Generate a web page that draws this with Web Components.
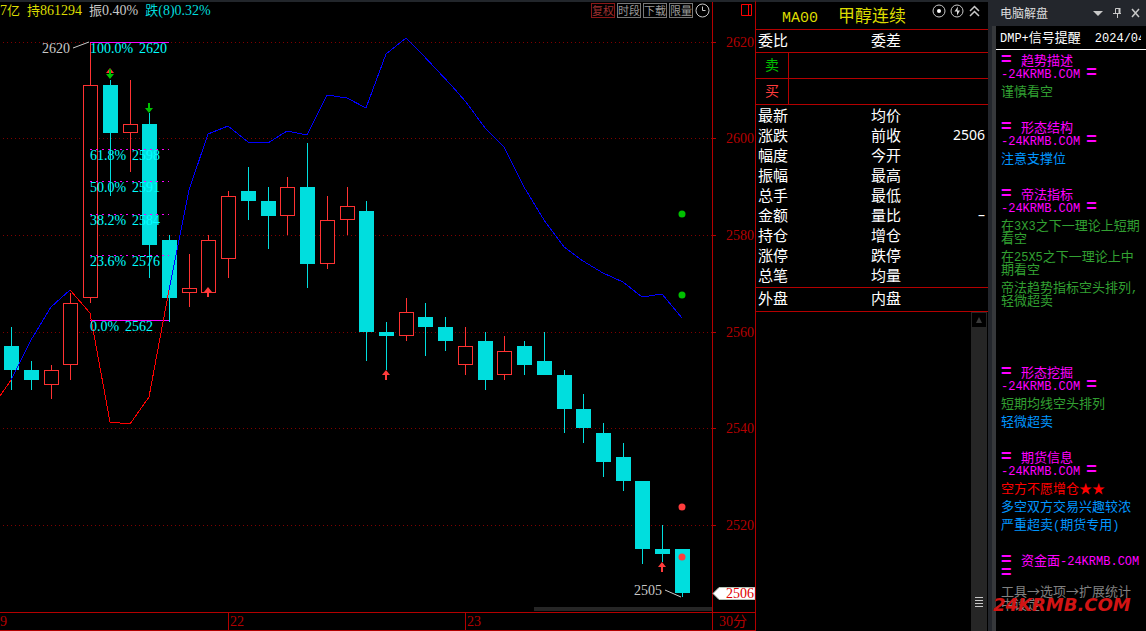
<!DOCTYPE html>
<html lang="zh-CN">
<head>
<meta charset="utf-8">
<title>甲醇连续 MA00</title>
<style>
  html, body { margin: 0; background: #000; }
  body { font-family: "Liberation Serif", "Noto Sans CJK SC", serif; font-size: 14px; color: #fff; }
</style>
</head>
<body>
<market-desk>
  <chart-pane slot="chart"></chart-pane>
  <quote-panel slot="quote" code="MA00" name="甲醇连续"></quote-panel>
  <insight-panel slot="insight">
    <insight-section topic="趋势描述"><insight-line tone="down">谨慎看空</insight-line></insight-section>
    <insight-section topic="形态结构"><insight-line tone="info">注意支撑位</insight-line></insight-section>
    <insight-section topic="帝法指标">
      <insight-line tone="down">在<b>3X3</b>之下一理论上短期<br>看空</insight-line>
      <insight-line tone="down">在<b>25X5</b>之下一理论上中<br>期看空</insight-line>
      <insight-line tone="down">帝法趋势指标空头排列<b>,</b><br>轻微超卖</insight-line>
    </insight-section>
    <insight-section topic="形态挖掘" apart>
      <insight-line tone="down">短期均线空头排列</insight-line>
      <insight-line tone="info">轻微超卖</insight-line>
    </insight-section>
    <insight-section topic="期货信息">
      <insight-line tone="alert">空方不愿增仓★★</insight-line>
      <insight-line tone="info">多空双方交易兴趣较浓</insight-line>
      <insight-line tone="info">严重超卖<b>(</b>期货专用<b>)</b></insight-line>
    </insight-section>
    <insight-section topic="资金面" inline>
      <insight-line tone="mute">工具→选项→扩展统计<br>中设定</insight-line>
      <brand-mark>24KRMB.COM</brand-mark>
    </insight-section>
  </insight-panel>
</market-desk>

<script>
const define = (name, html, setup) => customElements.define(name, class extends HTMLElement {
  constructor() {
    super();
    this.attachShadow({ mode: 'open' }).innerHTML = html;
  }
  connectedCallback() { if (setup) setup(this, this.shadowRoot); }
});

/* ---------- page frame ---------- */
define('market-desk', `
<style>
  :host { display: grid; grid-template-columns: minmax(0, 1fr) 233px 158px; min-height: 100vh; background: #000; }
</style>
<slot name="chart"></slot><slot name="quote"></slot><slot name="insight"></slot>`);

/* ---------- chart ---------- */
define('chart-pane', `
<style>
  :host { display: grid; grid-template-columns: minmax(0, 1fr) 43px; grid-template-rows: minmax(0, 1fr) auto;
          border-top: 2px solid #22262b; }
  .stage { display: grid; grid-template: 1fr / 1fr; min-width: 0; }
  .stage > * { grid-area: 1 / 1; }
  candle-plot { min-width: 0; }
  chart-header { align-self: start; }
  .scroll { align-self: end; justify-self: end; width: 25%; height: 4px; margin-bottom: 1px; background: #262626; }
  time-axis { grid-column: 1 / -1; }
</style>
<div class="stage"><candle-plot></candle-plot><chart-header></chart-header><div class="scroll"></div></div>
<price-axis></price-axis>
<time-axis></time-axis>`);

define('chart-header', `
<style>
  :host { display: flex; justify-content: space-between; align-items: start; font-size: 14px; line-height: 17px; white-space: nowrap; }
  .stats { display: flex; gap: 7px; }
  .y { color: #dcdc00; } .w { color: #c8c8c8; } .c { color: #00dcdc; }
  .i { font-size: 13px; }
  .tools { display: flex; gap: 2px; padding: 1px 2px 0 0; }
  button { box-sizing: border-box; width: 24px; height: 15px; padding: 0; border: 1px solid #777; background: #000; color: #999;
           font: 11px/13px "Noto Sans CJK SC", sans-serif; white-space: nowrap; overflow: hidden; }
  .on { color: #a03030; border-color: #8a1818; }
  .clock { width: 15px; border: 0; }
  svg { display: block; }
</style>
<div class="stats"><span class="y">7<span class="i">亿</span></span><span class="y"><span class="i">持</span>861294</span><span class="w"><span class="i">振</span>0.40%</span><span class="c"><span class="i">跌</span>(8)0.32%</span></div>
<div class="tools"><button class="on">复权</button><button>时段</button><button>下载</button><button>限量</button><button class="clock" aria-label="时间"><svg width="15" height="15" viewBox="0 0 15 15" fill="none" stroke="#c8c8c8"><circle cx="7.5" cy="7.5" r="6.5"/><path d="M7.5 3.5V7.5H10.5"/></svg></button></div>`);

/* x, body top, body bottom, high, low, rising */
const CANDLES = [
  [4,346,370,327,390,0],[24,370,380,361,390,0],[44,370,385,365,399,1],[63,303,365,293,380,1],
  [83,85,298,42,303,1],[103,85,133,80,196,0],[123,124,133,80,172,1],[142,124,245,113,278,0],
  [162,240,298,235,322,0],[182,288,293,254,307,1],[201,240,293,235,293,1],[221,196,259,191,278,1],
  [241,191,201,167,220,0],[261,201,216,187,249,0],[280,187,216,177,235,1],[300,187,264,143,288,0],
  [320,220,264,196,269,1],[340,206,220,187,235,1],[359,211,332,201,361,0],[379,332,336,322,370,0],
  [399,312,336,298,341,1],[418,317,327,303,356,0],[438,327,341,317,351,0],[458,346,365,327,375,1],
  [478,341,380,332,390,0],[497,351,375,336,380,1],[517,346,365,341,375,0],[537,361,375,332,375,0],
  [557,375,409,370,433,0],[576,409,428,394,443,0],[596,433,462,423,477,0],[616,457,481,443,491,0],
  [635,481,549,481,564,0],[655,549,554,525,562,0],[675,549,593,549,597,0]
];
const GRID = [[42,2620],[138,2600],[235,2580],[332,2560],[428,2540],[525,2520]];
const FIB = [[42,'100.0%',2620,1],[149,'61.8%',2598,0],[181,'50.0%',2591,0],[214,'38.2%',2584,0],[255,'23.6%',2576,0],[320,'0.0%',2562,1]];
const TREND = [
  ['#f00','0,396 11,380'],
  ['#00f','11,380 31,340 51,307 70,290'],
  ['#f00','70,290 90,313 110,422 130,424 149,397 169,290'],
  ['#00f','169,290 189,190 208,134 228,126 248,142 268,143 287,131 307,135 327,95 347,98 366,108 386,54 406,38 421,53 451,85 466,102 485,128 504,147 524,187 544,220 564,247 583,261 603,273 623,282 642,297 662,294 682,318']
];
const rect = (x, y, w, h, fill) => `<rect x="${x}" y="${y}" width="${w}" height="${h}" fill="${fill}"/>`;

define('candle-plot', `
<style>
  :host { display: block; overflow: hidden; }
  svg { display: block; width: 100%; height: 100%; min-height: 600px; font: 14px "Liberation Serif", serif; }
</style>
<svg role="img" aria-label="30分钟K线"></svg>`, (host, root) => {
  let s = '<g transform="translate(0,-2)"><g shape-rendering="crispEdges">';
  for (const [y] of GRID) s += `<path d="M3 ${y}.5H3000" stroke="#800000" stroke-dasharray="1 3"/>`;
  for (const [x, t, b, hi, lo, up] of CANDLES) {
    const c = up ? '#ff3232' : '#00dede';
    s += rect(x + 7, hi, 1, lo - hi, c) + rect(x, t, 15, b - t, c);
    if (up) s += rect(x + 1, t + 1, 13, b - t - 2, '#000');
  }
  for (const [y,,, solid] of FIB)
    s += `<path d="M90 ${y}.5H169" stroke="#f0f" ${solid ? '' : 'stroke-dasharray="2 4"'}/>`;
  for (const [c, pts] of TREND) s += `<polyline points="${pts}" fill="none" stroke="${c}"/>`;
  s += '</g>';
  for (const [y, pct, price] of FIB)
    s += `<text x="90" y="${y + 11}" fill="#00ffff">${pct}</text><text x="${y === 42 ? 139 : y === 320 ? 125 : 132}" y="${y + 11}" fill="#00ffff">${price}</text>`;
  s += `<g fill="none" stroke="#c8c8c8"><path d="M73 48L89 42M665 590L681 597"/></g>
    <g fill="#c8c8c8"><text x="42" y="53">2620</text><text x="634" y="595">2505</text></g>
    <path d="M110 68L114 73H106Z" fill="#ff3232"/>`;
  for (const [x, y] of [[110,69],[149,103]]) s += `<path d="M${x-1} ${y}h2v5h3l-4 5l-4-5h3z" fill="#00c000"/>`;
  for (const [x, y] of [[208,287],[386,370],[662,562]]) s += `<path d="M${x-1} ${y+10}h2v-5h3l-4-5l-4 5h3z" fill="#ff3c3c"/>`;
  for (const [y, c] of [[214,'#00c000'],[295,'#00c000'],[507,'#ff3c3c'],[557,'#ff3c3c']]) s += `<circle cx="682" cy="${y}" r="3.5" fill="${c}"/>`;
  root.querySelector('svg').innerHTML = s + '</g>';
});

define('price-axis', `
<style>
  :host { display: block; border-left: 1px solid #b40000; }
  svg { display: block; width: 100%; height: 100%; overflow: visible; font: 14px "Liberation Serif", serif; }
</style>
<svg role="img" aria-label="价格"></svg>`, (host, root) => {
  let s = '<g transform="translate(0,-2)">';
  for (const [y, p] of GRID) s += rect(0, y, 3, 1, '#b40000') + `<text x="13" y="${y + 5}" fill="#b40000">${p}</text>`;
  s += `<path d="M28.500 4.500h10v11h-10zM35.500 4.500v11" fill="none" stroke="#f00"/>
    <path d="M0 593.5L6 587.5H42V599.5H6Z" fill="#fff" stroke="#b8c4b8"/><text x="13" y="598" fill="#e00000">2506</text></g>`;
  root.querySelector('svg').innerHTML = s;
});

define('time-axis', `
<style>
  :host { display: grid; grid-template-columns: 228px 237px minmax(0, 1fr) 43px; height: 17px; line-height: 17px;
          border: solid #b40000; border-width: 1px 0; color: #b40000; }
  span + span { border-left: 1px solid #b40000; padding-left: 1px; }
  span + span:last-child { padding-left: 6px; }
</style>
<span>9</span><span>22</span><span>23</span><span>30分</span>`);

/* ---------- quote ---------- */
const PAIRS = [['最新','均价'],['涨跌','前收','2506'],['幅度','今开'],['振幅','最高'],['总手','最低'],['金额','量比','–'],['持仓','增仓'],['涨停','跌停'],['总笔','均量']];
const pairRow = ([a, b, v = '']) => `<tr><th scope="row">${a}</th><td></td><th scope="row">${b}</th><td>${v}</td></tr>`;
const COLS = '<colgroup><col class="k"><col class="v"><col class="k"><col></colgroup>';

define('quote-panel', `
<style>
  :host { display: flex; flex-direction: column; border-left: 1px solid #b40000; border-top: 2px solid #22262b;
          font-family: "Noto Sans CJK SC", sans-serif; }
  header { display: flex; align-items: flex-start; height: 27px; border-bottom: 1px solid #b40000; color: #dcdc00; padding: 0 6px 0 26px; }
  h1 { flex: 1; display: flex; align-items: baseline; gap: 20px; margin: 0; font-size: 17px; line-height: 25px; font-weight: 400; white-space: nowrap; }
  h1 .code { font-family: "Liberation Mono", monospace; font-size: 15px; }
  header svg { display: block; padding-top: 2px; }
  table { width: 100%; table-layout: fixed; border-collapse: separate; border-spacing: 0; border-bottom: 1px solid #b40000;
          font-size: 15px; line-height: 20px; }
  .k { width: 34px; } .v { width: 79px; }
  th { font-weight: 400; text-align: left; padding: 0 0 0 2px; white-space: nowrap; }
  td { padding: 0 3px 0 0; text-align: right; font: 14px/20px "Noto Sans", sans-serif; }
  .ratio, .main { padding-bottom: 2px; }
  .vol { padding-bottom: 3px; }
  .book { line-height: 22px; font-size: 14px; }
  .book th { box-sizing: border-box; height: 25px; vertical-align: top; text-align: center; padding: 0; border-right: 1px solid #b40000; }
  .book tr + tr > * { border-top: 1px solid #b40000; }
  .book tr + tr > th { height: 26px; }
  .sell { color: #00c000; } .buy { color: #ff3c3c; }
  .ticks { flex: 1; display: flex; justify-content: flex-end; }
  .bar { box-sizing: border-box; width: 17px; display: flex; flex-direction: column; justify-content: space-between; align-items: center;
         background: #262626; border-right: 1px solid #000; }
  .bar svg { display: block; }
  .bar svg:last-child { margin-bottom: 23px; }
</style>
<header><h1><span class="code"></span><span class="name"></span></h1>
  <svg width="50" height="14" viewBox="0 0 50 14" fill="none" stroke="#c8c8c8" aria-hidden="true"><circle cx="7" cy="7" r="6"/><circle cx="7" cy="7" r="2" fill="#fff" stroke="none"/><circle cx="25" cy="7" r="6"/><path d="M26 2.5L22.5 7.5H25V11.5L28 6.5H25.5Z" fill="#ddd" stroke="none"/><path d="M38 7L42.500 2.500L47 7M38 12L42.500 7.500L47 12" stroke-width="1.500"/></svg>
</header>
<table class="ratio">${COLS}${pairRow(['委比','委差'])}</table>
<table class="book"><colgroup><col style="width:33px"><col></colgroup><tr><th scope="row" class="sell">卖</th><td></td></tr><tr><th scope="row" class="buy">买</th><td></td></tr></table>
<table class="main">${COLS}${PAIRS.map(pairRow).join('')}</table>
<table class="vol">${COLS}${pairRow(['外盘','内盘'])}</table>
<div class="ticks"><div class="bar">
  <svg width="16" height="16" viewBox="0 0 16 16" aria-hidden="true"><rect x="1" y="1" width="14" height="14" fill="#000"/><path d="M8 5L11 11H5Z" fill="#3a3a3a"/></svg>
  <svg width="8" height="12" viewBox="0 0 8 12" aria-hidden="true" shape-rendering="crispEdges"><path d="M0 1.500H8M0 4.500H8M0 7.500H8M0 10.500H8" stroke="#c8c8c8"/></svg>
</div></div>`, (host, root) => {
  root.querySelector('.code').textContent = host.getAttribute('code');
  root.querySelector('.name').textContent = host.getAttribute('name');
});

/* ---------- commentary ---------- */
define('insight-panel', `
<style>
  :host { display: flex; flex-direction: column; min-width: 0; background: #000; box-sizing: border-box;
          border-left: 4px solid #23262c; font-family: "Noto Sans CJK SC", sans-serif; position: relative; }
  .title { display: flex; align-items: center; height: 26px; padding: 0 6px 0 8px; background: #23262c; color: #dcdcdc; }
  h2 { flex: 1; margin: 0; font-size: 12px; line-height: 24px; font-weight: 400; }
  .body { flex: 1; border-left: 4px solid #36383b; }
  .stamp { display: flex; align-items: baseline; gap: 14px; height: 23px; line-height: 22px; padding: 0 0 0 4px; margin-right: 5px; font-size: 13px;
           white-space: nowrap; overflow: hidden; }
  .m { font-family: "Liberation Mono", monospace; font-size: 12px; }
  hr { margin: 0; border: 0; height: 1px; background: #fff; }
  .list { display: flex; flex-direction: column; gap: 23px; padding: 3px 0 0 5px; }
</style>
<div class="title"><h2>电脑解盘</h2><svg width="50" height="12" viewBox="0 0 50 12" fill="none" stroke="#c8c8c8" aria-hidden="true"><path d="M3 4H13L8 9Z" fill="#c8c8c8" stroke="none"/><path d="M25.500 6V1.500H29.500V6M23 6.500H31M27.500 7V11"/><path d="M29.500 1V6" stroke-width="2"/><path d="M42 2L49 10M49 2L42 10" stroke-width="1.500"/></svg></div>
<div class="body">
  <div class="stamp"><span><span class="m">DMP+</span>信号提醒</span><span class="m">2024/04</span></div>
  <hr>
  <div class="list"><slot></slot></div>
</div>`);

define('insight-section', `
<style>
  :host { display: flex; flex-direction: column; gap: 5px; position: relative; font-size: 13px; line-height: 13px; white-space: nowrap; }
  :host([apart]) { margin-top: 36px; }
  h3 { margin: 0; font-size: 13px; line-height: 13px; font-weight: 400; color: #f0f; }
  h3 div { height: 13px; }
  .m { font-family: "Liberation Mono", monospace; font-size: 12px; line-height: 0; }
  .eq { display: inline-block; width: 20px; font: 700 18px/0 "Liberation Sans", sans-serif; }
  .m + .eq { margin-left: 6px; }
</style>
<h3></h3><slot></slot>`, (host, root) => {
  const topic = host.getAttribute('topic'), site = '<span class="m">-24KRMB.COM</span>', eq = '<span class="eq">=</span>';
  root.querySelector('h3').innerHTML = host.hasAttribute('inline')
    ? `<div>${eq}${topic}${site}</div><div>${eq}</div>`
    : `<div>${eq}${topic}</div><div>${site}${eq}</div>`;
});

define('insight-line', `
<style>
  :host { display: block; color: #32a032; }
  :host([tone="info"]) { color: #0096ff; }
  :host([tone="alert"]) { color: #f00; }
  :host([tone="mute"]) { color: #808080; }
  ::slotted(b) { font: 12px/0 "Liberation Mono", monospace; }
</style>
<slot></slot>`);

define('brand-mark', `
<style>
  :host { position: absolute; left: -8px; bottom: -5px; color: #d21414; font: italic 700 18px/20px "DejaVu Sans", sans-serif; }
</style>
<slot></slot>`);
</script>
</body>
</html>
